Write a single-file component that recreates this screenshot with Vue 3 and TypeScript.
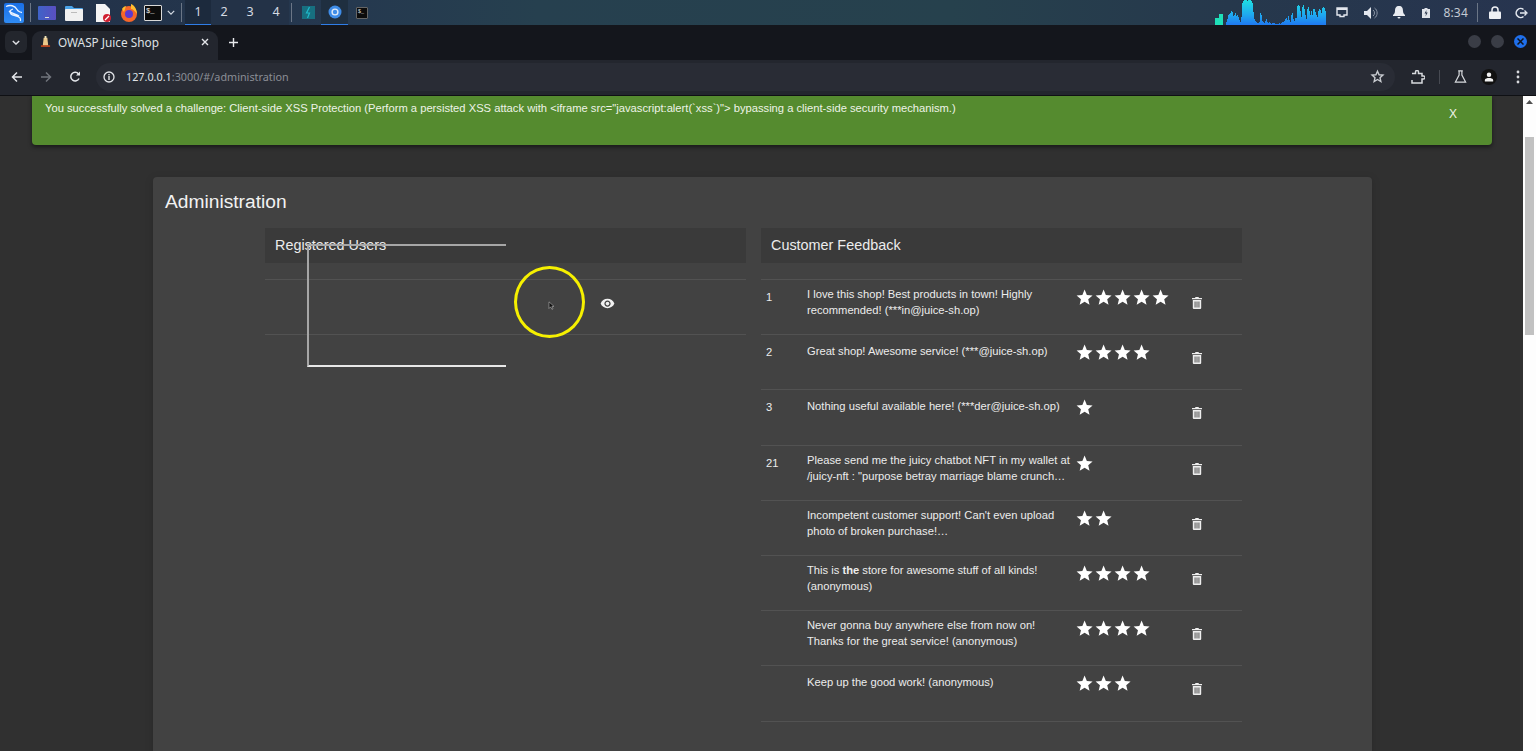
<script setup lang="ts">
interface Feedback { id: string; html: string; stars: number; single: boolean }
const feedback: Feedback[] = [
  { id: '1', html: 'I love this shop! Best products in town! Highly recommended! (***in@juice-sh.op)', stars: 5, single: false },
  { id: '2', html: 'Great shop! Awesome service! (***@juice-sh.op)', stars: 4, single: true },
  { id: '3', html: 'Nothing useful available here! (***der@juice-sh.op)', stars: 1, single: true },
  { id: '21', html: 'Please send me the juicy chatbot NFT in my wallet at /juicy-nft : "purpose betray marriage blame crunch…', stars: 1, single: false },
  { id: '', html: "Incompetent customer support! Can't even upload photo of broken purchase!…", stars: 2, single: false },
  { id: '', html: 'This is <b>the</b> store for awesome stuff of all kinds! (anonymous)', stars: 4, single: false },
  { id: '', html: 'Never gonna buy anywhere else from now on! Thanks for the great service! (anonymous)', stars: 4, single: false },
  { id: '', html: 'Keep up the good work! (anonymous)', stars: 3, single: true },
]
const workspaces = ['1', '2', '3', '4']
const graph: number[] = [0,7,7,7,7,11,11,11,11,0,0,0,3,6,10,11,12,14,13,9,10,12,9,10,8,5,3,8,22,24,25,25,25,24,25,25,25,24,22,13,6,4,3,2,2,3,12,10,4,3,2,4,6,3,2,3,2,1,2,2,2,1,1,1,1,2,1,2,3,3,4,6,7,5,9,5,3,10,12,6,4,7,7,19,20,19,14,8,18,20,16,10,6,16,18,14,10,14,10,16,16,13,10,8,14,16,15,12,17,18,17,14,0]
</script>

<template>
  <div class="screen">
    <header class="taskbar">
      <div class="kali">
        <svg viewBox="0 0 20 20" width="20" height="20"><defs><linearGradient id="kb" x1="0" y1="0" x2="0" y2="1"><stop offset="0" stop-color="#1a6fe6"/><stop offset="1" stop-color="#2f8cf5"/></linearGradient></defs><rect width="20" height="20" rx="2" fill="url(#kb)"/><path d="M2 3.500c4-2 9-1 11 3 1 2 4 3 5 3M9 6c-3 1-4 3-2 5 2 2 7 1 9 4 .6 1 .6 2 .4 3M5 8c3 3 7 3 10 5" fill="none" stroke="#e8f2ff" stroke-width="1.300"/></svg>
      </div>
      <i class="sep sep1"></i>
      <svg class="ti t1" viewBox="0 0 18 14" width="18" height="14"><defs><linearGradient id="dk" x1="0" x2="1"><stop offset="0" stop-color="#3f63c8"/><stop offset="1" stop-color="#5a4fc0"/></linearGradient></defs><rect width="18" height="14" rx="1" fill="url(#dk)"/><rect x="7" y="11" width="4" height="1" fill="#ddd"/></svg>
      <svg class="ti t2" viewBox="0 0 18 16" width="18" height="16"><path d="M0 2a1 1 0 0 1 1-1h6l2 2h8a1 1 0 0 1 1 1v2H0z" fill="#4ba3e8"/><rect y="4" width="18" height="12" rx="1" fill="#f0f0f0"/><rect x="6" y="7" width="6" height="1" fill="#bbb"/></svg>
      <svg class="ti t3" viewBox="0 0 16 18" width="16" height="18"><path d="M1 0h9l5 5v13H1z" fill="#f4f4f4"/><circle cx="12" cy="14" r="4" fill="#d02030"/><path d="M10 16l4-4" stroke="#fff" stroke-width="1.200"/></svg>
      <svg class="ti t4" viewBox="0 0 18 18" width="18" height="18"><circle cx="9" cy="10" r="8" fill="#f5662a"/><circle cx="9" cy="10" r="4" fill="#5a3ad0"/><path d="M11 0c3 1 6 5 6 10-2-3-4-5-6-5zM2 5c1-2 3-3 4-3L4 8z" fill="#ffbd2e"/></svg>
      <div class="term t5"><span>$_</span></div>
      <svg class="chev t6" viewBox="0 0 10 6" width="8" height="5"><path d="M1 1l4 4 4-4" fill="none" stroke="#d5dbe3" stroke-width="1.500"/></svg>
      <i class="sep sep2"></i>
      <nav class="workspaces">
        <span v-for="w in workspaces" :key="w" class="ws" :class="{ on: w === '1' }">{{ w }}</span>
      </nav>
      <i class="sep sep3"></i>
      <div class="teal">
        <svg viewBox="0 0 13 13" width="13" height="13"><rect width="13" height="13" fill="#176f80"/><path d="M7.500 1L4.500 7h3l-2 5" fill="none" stroke="#1fb9c9" stroke-width="1.200"/></svg>
      </div>
      <div class="chromium">
        <svg viewBox="0 0 14 14" width="14" height="14"><circle cx="7" cy="7" r="6.500" fill="#3f8de8"/><circle cx="7" cy="7" r="3.600" fill="#dfe9f7"/><circle cx="7" cy="7" r="2.200" fill="#3f8de8"/></svg>
      </div>
      <div class="term small"><span>$_</span></div>

      <div class="tray">
        <svg class="graph" viewBox="0 0 113 25" width="113" height="25">
          <defs><linearGradient id="gr" x1="0" y1="0" x2="0" y2="25" gradientUnits="userSpaceOnUse"><stop offset="0" stop-color="#1fe0e0"/><stop offset=".6" stop-color="#1fa8f0"/><stop offset="1" stop-color="#1f78f0"/></linearGradient></defs>
          <template v-for="(h, i) in graph" :key="i">
            <rect :x="i" :y="25 - h" width="1" :height="h" :fill="i < 10 ? '#1fe0b8' : 'url(#gr)'"/>
          </template>
        </svg>
        <svg class="tr mon" viewBox="0 0 12 11" width="12" height="11"><path d="M1 1h10v7H8v1.500H4V8H1z" fill="none" stroke="#e3e7ee" stroke-width="1.400"/><rect x="1" y="1" width="10" height="2" fill="#e3e7ee"/></svg>
        <svg class="tr vol" viewBox="0 0 14 12" width="14" height="12"><path d="M0 4h3l4-4v12L3 8H0z" fill="#e3e7ee"/><path d="M9 3c2 1 2 5 0 6M10.500 1c3.500 2 3.500 8 0 10" fill="none" stroke="#8b95a5" stroke-width="1"/></svg>
        <svg class="tr bell" viewBox="0 0 12 13" width="12" height="13"><path d="M6 0c3 0 4 2 4 5 0 2 1 3 2 4v1H0V9c1-1 2-2 2-4 0-3 1-5 4-5zM4.500 11h3a1.500 1.500 0 0 1-3 0z" fill="#e8ebf0"/></svg>
        <svg class="tr bat" viewBox="0 0 8 10" width="8" height="10"><path d="M2.500 0h3v1H8v9H0V1h2.500z" fill="#dfe3ea"/><path d="M4.500 2L2.500 5.500h1.500L3.500 8.500 5.700 4.500H4.200z" fill="#27344a"/></svg>
        <span class="clock">8:34</span>
        <i class="sep sep4"></i>
        <svg class="tr lock" viewBox="0 0 12 13" width="12" height="13"><path d="M3 6V4a3 3 0 0 1 6 0v2" fill="none" stroke="#eef0f4" stroke-width="1.500"/><rect y="5.500" width="12" height="7.500" rx="1" fill="#eef0f4"/></svg>
        <svg class="tr out" viewBox="0 0 13 12" width="13" height="12"><path d="M8.500 2.500A4.500 4.500 0 1 0 8.500 9.500" fill="none" stroke="#e3e7ee" stroke-width="1.600"/><path d="M5 6h6M9.500 3.500L12 6 9.500 8.500" fill="none" stroke="#e3e7ee" stroke-width="1.300"/></svg>
      </div>
    </header>

    <div class="tabstrip">
      <div class="tabmenu">
        <svg viewBox="0 0 10 6" width="8" height="5"><path d="M1 1l4 4 4-4" fill="none" stroke="#dfe1e5" stroke-width="1.700"/></svg>
      </div>
      <div class="tab">
        <svg class="favicon" viewBox="0 0 12 12" width="11" height="11"><path d="M4 2h4l1 9H3z" fill="#ecc88a"/><rect x="5" y="0" width="2" height="3" fill="#f1e4b8"/><rect x="1" y="10" width="10" height="2" fill="#b3421d"/></svg>
        <span class="tabtitle">OWASP Juice Shop</span>
        <svg class="tabx" viewBox="0 0 8 8" width="8" height="8"><path d="M1 1l6 6M7 1L1 7" stroke="#e4e6ea" stroke-width="1.400"/></svg>
      </div>
      <svg class="plus" viewBox="0 0 9 9" width="9" height="9"><path d="M4.500 0v9M0 4.500h9" stroke="#e8eaed" stroke-width="1.400"/></svg>
      <div class="winbtns">
        <i class="wb"></i><i class="wb"></i>
        <i class="wb close"><svg viewBox="0 0 7 7" width="7" height="7"><path d="M.5.500l6 6M6.500.500l-6 6" stroke="#10151d" stroke-width="1.500"/></svg></i>
      </div>
    </div>

    <div class="toolbar">
      <svg class="nav" viewBox="0 0 12 12" width="12" height="12"><path d="M11 6H2M6 1.500L1.500 6 6 10.500" fill="none" stroke="#e3e5e9" stroke-width="1.500"/></svg>
      <svg class="nav fw" viewBox="0 0 12 12" width="12" height="12"><path d="M1 6h9M6 1.500L10.500 6 6 10.500" fill="none" stroke="#70747c" stroke-width="1.500"/></svg>
      <svg class="nav re" viewBox="0 0 12 12" width="12" height="12"><path d="M10 7.500A4.300 4.300 0 1 1 9.500 3" fill="none" stroke="#e3e5e9" stroke-width="1.500"/><path d="M11 .5v4H7z" fill="#e3e5e9"/></svg>
      <div class="omni">
        <svg class="info" viewBox="0 0 12 12" width="12" height="12"><circle cx="6" cy="6" r="5" fill="none" stroke="#e3e5e9" stroke-width="1.300"/><rect x="5.300" y="5" width="1.400" height="4" fill="#e3e5e9"/><rect x="5.300" y="3" width="1.400" height="1.300" fill="#e3e5e9"/></svg>
        <span class="url"><b>127.0.0.1</b>:3000/#/administration</span>
        <svg class="ostar" viewBox="0 0 24 24" width="15" height="15"><path d="M12 3.500l2.500 5.700 6.200.6-4.700 4.100 1.400 6.100L12 16.800l-5.400 3.200L8 13.900 3.300 9.800l6.200-.6z" fill="none" stroke="#c9ccd1" stroke-width="2.200"/></svg>
      </div>
      <svg class="act ext" viewBox="0 0 14 14" width="14" height="14"><path d="M1 3.500h3.500V2a1.500 1.500 0 0 1 3 0v1.500H11V6h1.500a1.500 1.500 0 0 1 0 3H11v4H1v-3" fill="none" stroke="#d8dade" stroke-width="1.500"/></svg>
      <i class="tsep"></i>
      <svg class="act flask" viewBox="0 0 14 14" width="13" height="13"><path d="M4.500 1h5M5.500 1v4.500L1.500 13h11L8.500 5.500V1" fill="none" stroke="#d8dade" stroke-width="1.300"/></svg>
      <div class="avatar"><svg viewBox="0 0 12 12" width="10" height="10"><circle cx="6" cy="3.300" r="2.700" fill="#f1f1f1"/><path d="M1 11.500V9.500c0-1.500 3-2.200 5-2.200s5 .7 5 2.200v2z" fill="#f1f1f1"/></svg></div>
      <svg class="act menu" viewBox="0 0 4 14" width="4" height="14"><circle cx="2" cy="2" r="1.400" fill="#d8dade"/><circle cx="2" cy="7" r="1.400" fill="#d8dade"/><circle cx="2" cy="12" r="1.400" fill="#d8dade"/></svg>
    </div>

    <div class="viewport">
      <main class="page">
        <div class="snack">
          <span>You successfully solved a challenge: Client-side XSS Protection (Perform a persisted XSS attack with &lt;iframe src="javascript:alert(`xss`)"&gt; bypassing a client-side security mechanism.)</span>
          <button class="snackx">X</button>
        </div>
        <section class="card">
          <h1>Administration</h1>
          <div class="cols">
            <div class="col">
              <div class="colhead">Registered Users</div>
              <div class="rows">
                <div class="urow">
                  <svg class="eye" viewBox="0 0 24 24" width="15" height="15"><path d="M12 4.500C7 4.500 2.730 7.610 1 12c1.730 4.390 6 7.500 11 7.500s9.270-3.110 11-7.500c-1.730-4.390-6-7.500-11-7.500zM12 17c-2.760 0-5-2.240-5-5s2.240-5 5-5 5 2.240 5 5-2.240 5-5 5zm0-8c-1.660 0-3 1.340-3 3s1.340 3 3 3 3-1.340 3-3-1.340-3-3-3z" fill="#f2f2f2"/></svg>
                </div>
              </div>
              <div class="iframe"></div>
              <div class="cursor-ring">
                <svg viewBox="0 0 8 12" width="7" height="10"><path d="M1 1v8l2-2 1.500 3 1.300-.6L4.500 6.500H7z" fill="#111" stroke="#ccc" stroke-width=".6"/></svg>
              </div>
            </div>
            <div class="col">
              <div class="colhead">Customer Feedback</div>
              <div class="rows">
                <div v-for="(f, i) in feedback" :key="i" class="frow">
                  <span class="fid">{{ f.id }}</span>
                  <span class="ftext" :class="{ single: f.single }" v-html="f.html"></span>
                  <span class="stars">
                    <svg v-for="s in f.stars" :key="s" viewBox="0 0 24 24" width="19.200" height="19.200"><path d="M12 17.270L18.180 21l-1.640-7.030L22 9.240l-7.190-.61L12 2 9.190 8.630 2 9.240l5.460 4.730L5.820 21z" fill="#fff"/></svg>
                  </span>
                  <svg class="trash" viewBox="0 0 10 12" width="10" height="12"><path d="M3.500 0h3l.5 1h3v1.200H0V1h3zM.8 3h8.400v8a1 1 0 0 1-1 1H1.800a1 1 0 0 1-1-1zM2.600 4.500v6h.9v-6zm1.950 0v6h.9v-6zm1.950 0v6h.9v-6z" fill="#eee" fill-rule="evenodd"/></svg>
                </div>
              </div>
            </div>
          </div>
        </section>
      </main>
      <aside class="scrollbar">
        <svg viewBox="0 0 7 4" width="7" height="4"><path d="M3.500 0L7 4H0z" fill="#505050"/></svg>
        <div class="thumb"></div>
      </aside>
    </div>
  </div>
</template>

<style scoped>
.screen { width: 1536px; height: 751px; display: flex; flex-direction: column; overflow: hidden; font-family: "Liberation Sans", Arial, sans-serif; background: #303030; }

.taskbar { height: 25px; flex: none; display: flex; align-items: center; background: linear-gradient(90deg, #223148 0%, #25384f 22%, #26404f 35%, #26414d 62%, #26384c 80%, #27344f 100%); color: #d6dbe3; font-family: "Noto Sans", sans-serif; }
.kali { width: 20px; height: 20px; margin-left: 4px; }
.kali svg { display: block; }
.sep { width: 1px; height: 19px; background: #6b7686; flex: none; }
.sep1 { margin-left: 6px; }
.ti { flex: none; }
.t1 { margin-left: 7px; }
.t2 { margin-left: 9px; }
.t3 { margin-left: 12px; }
.t4 { margin-left: 9px; }
.term { width: 18px; height: 16px; background: #0c0c0c; border: 1px solid #d9d9d9; border-radius: 1px; box-sizing: border-box; color: #eee; font: 7px/10px "Liberation Mono", monospace; padding-left: 1px; flex: none; }
.t5 { margin-left: 6px; }
.t6 { margin-left: 5px; flex: none; }
.sep2 { margin-left: 6px; }
.workspaces { display: flex; height: 25px; margin-left: 3px; background: #233247; }
.ws { width: 26px; text-align: center; line-height: 24px; font-size: 12.500px; box-sizing: border-box; }
.ws.on { background: #1c2a3d; border-bottom: 1px solid #2f7de8; }
.sep3 { margin-left: 2px; }
.teal { margin-left: 10px; height: 13px; }
.teal svg { display: block; }
.chromium { margin-left: 6px; width: 27px; height: 25px; display: flex; align-items: center; justify-content: center; background: #1f2f40; box-sizing: border-box; border-bottom: 1px solid #2f7de8; }
.term.small { width: 12px; height: 12px; margin-left: 8px; border-color: #666; font-size: 5px; line-height: 8px; }
.tray { margin-left: auto; display: flex; align-items: center; height: 25px; padding-right: 8px; }
.graph { display: block; flex: none; }
.tr { flex: none; display: block; }
.mon { margin-left: 9px; }
.vol { margin-left: 16px; }
.bell { margin-left: 15px; }
.bat { margin-left: 17px; }
.clock { margin-left: 13px; font-size: 12px; color: #c4cad4; letter-spacing: .2px; }
.sep4 { margin-left: 9px; }
.lock { margin-left: 11px; }
.out { margin-left: 14px; }

.tabstrip { height: 35px; flex: none; background: #14161c; display: flex; align-items: flex-start; position: relative; }
.tabmenu { width: 22px; height: 22px; margin: 6px 0 0 5px; background: #23262d; border-radius: 6px; display: flex; align-items: center; justify-content: center; }
.tab { width: 186px; height: 29px; margin: 6px 0 0 5px; background: #23262e; border-radius: 9px 9px 0 0; display: flex; align-items: center; box-sizing: border-box; padding: 0 9px 8px 8px; font: 11.800px "Noto Sans", sans-serif; color: #dfe1e5; }
.tabtitle { margin-left: 7px; flex: 1; white-space: nowrap; }
.plus { margin: 13px 0 0 11px; }
.winbtns { margin-left: auto; display: flex; gap: 10px; padding: 10px 9px 0 0; }
.wb { width: 13px; height: 13px; border-radius: 50%; background: #3a3d46; display: flex; align-items: center; justify-content: center; }
.wb.close { background: #1f6feb; }

.toolbar { height: 36px; flex: none; box-sizing: border-box; padding-bottom: 2px; background: #23262e; display: flex; align-items: center; color: #dfe1e5; border-bottom: 1px solid #0f1014; }
.nav { margin-left: 11px; flex: none; }
.nav.fw { margin-left: 17px; }
.nav.re { margin-left: 17px; }
.omni { margin-left: 15px; width: 1299px; height: 28px; background: #292c35; border-radius: 14px; display: flex; align-items: center; box-sizing: border-box; padding: 0 10px 0 7px; flex: none; }
.info { flex: none; }
.url { margin-left: 11px; font: 10.800px "Noto Sans", sans-serif; color: #8b8e95; flex: 1; white-space: nowrap; }
.url b { font-weight: 400; color: #dfe1e5; }
.act { flex: none; }
.ext { margin-left: 16px; }
.tsep { width: 1px; height: 14px; background: #474a52; margin-left: 14px; flex: none; }
.flask { margin-left: 14px; }
.avatar { width: 16px; height: 16px; border-radius: 50%; background: #111; display: flex; align-items: center; justify-content: center; margin-left: 14px; flex: none; }
.menu { margin-left: 19px; }

.viewport { flex: 1; min-height: 0; display: flex; }
.page { flex: 1; min-width: 0; background: #303030; overflow: hidden; }
.snack { margin: 0 31px 0 32px; height: 49px; box-sizing: border-box; background: #558b2f; border-radius: 0 0 4px 4px; box-shadow: 0 2px 4px rgba(0,0,0,.5); display: flex; color: #eef3e8; font-size: 11.200px; padding: 5px 30px 0 13px; line-height: 14px; }
.snack span { flex: 1; }
.snackx { background: none; border: 0; color: #eef3e8; font: 12px "Liberation Sans", sans-serif; padding: 0; margin: 6px 5px 0 0; height: 14px; }
.card { margin: 32px 0 0 153px; width: 1219px; height: 600px; background: #424242; border-radius: 4px 4px 0 0; box-shadow: 0 2px 8px rgba(0,0,0,.15); box-sizing: border-box; padding: 13px 0 0 12px; }
h1 { margin: 0; font: 400 19.200px/24px "Liberation Sans", sans-serif; color: #f2f2f2; }
.cols { display: flex; gap: 15.500px; margin: 14px 0 0 100px; }
.col { width: 480.500px; position: relative; }
.colhead { height: 35px; background: #3a3a3a; font: 14.400px/35px "Liberation Sans", sans-serif; padding-left: 10px; color: #ececec; }
.rows { margin-top: 16px; border-top: 1px solid #525252; }
.urow { height: 54px; border-bottom: 1px solid #525252; box-sizing: content-box; position: relative; }
.eye { position: absolute; left: 335px; top: 16px; }
.iframe { position: absolute; left: 42px; top: 16px; width: 199px; height: 123px; border-top: 2px solid #a6a6a6; border-left: 2px solid #a6a6a6; border-bottom: 2px solid #e8e8e8; box-sizing: border-box; }
.cursor-ring { position: absolute; left: 249px; top: 38px; width: 71px; height: 72px; border: 3px solid #f6f000; border-radius: 50%; box-sizing: border-box; display: flex; align-items: center; justify-content: center; padding: 8px 0 0 4px; }
.frow { height: 55.200px; box-sizing: border-box; border-bottom: 1px solid #525252; display: grid; grid-template-columns: 46px 267.500px 117px 20px; align-items: start; padding-top: 7px; color: #ececec; font-size: 11.200px; line-height: 16px; }
.fid { padding-left: 5px; padding-top: 2px; }
.ftext { display: block; padding-right: 2px; margin-top: -1px; }
.ftext.single { margin-top: 1px; }
.stars { display: flex; height: 20px; margin-top: 1px; }
.stars svg { display: block; flex: none; }
.trash { margin-top: 10px; }

.scrollbar { width: 13px; flex: none; background: #fdfdfd; display: flex; flex-direction: column; align-items: center; padding-top: 4px; box-sizing: border-box; }
.thumb { width: 9px; height: 198px; background: #c1c1c1; margin-top: 33px; }
</style>

<style>
html, body { margin: 0; overflow: hidden; }
</style>
